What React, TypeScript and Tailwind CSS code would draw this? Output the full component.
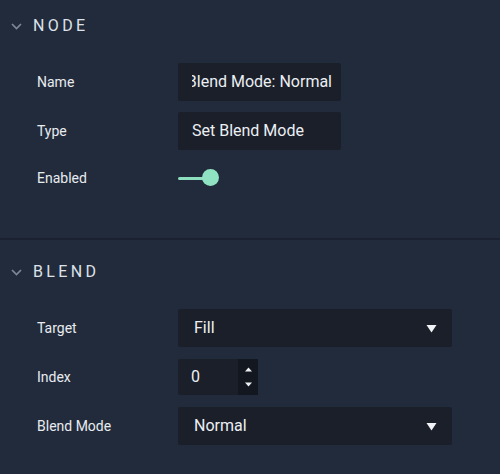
import { ReactNode } from 'react';

function Chevron() {
  return (
    <svg width="11" height="7" viewBox="0 0 11 7" className="shrink-0">
      <path d="M1 1l4.5 4.5L10 1" fill="none" stroke="#7d8798" strokeWidth="1.7" />
    </svg>
  );
}

function Caret() {
  return (
    <svg width="11" height="9" viewBox="0 0 11 9">
      <path d="M0.5 1h10L5.5 8.5z" fill="#f1f3f6" />
    </svg>
  );
}

function SectionHeader({ title }: { title: string }) {
  return (
    <div className="flex h-12 items-center gap-[11px] pl-[11px] pt-1">
      <Chevron />
      <span className="text-[16px] tracking-[0.21em] text-[#dde2ea]">{title}</span>
    </div>
  );
}

function Row({ label, children }: { label: string; children: ReactNode }) {
  return (
    <div className="flex h-[38px] items-center">
      <div className="w-[178px] shrink-0 pl-[37px] text-[14px] text-[#e8ebf0]">{label}</div>
      {children}
    </div>
  );
}

function Select({ value }: { value: string }) {
  return (
    <div className="flex h-[38px] w-[274px] items-center justify-between rounded-[2px] bg-[#1a1f2a] pl-4 pr-[15px] text-[16px] text-[#eceff3]">
      <span>{value}</span>
      <Caret />
    </div>
  );
}

export default function App() {
  return (
    <div
      className="h-[474px] w-[500px] overflow-hidden bg-[#222b3b]"
      style={{ fontFamily: 'Roboto, "Noto Sans", sans-serif' }}
    >
      {/* Node section */}
      <div className="pb-[43px]">
        <SectionHeader title="NODE" />
        <div className="mt-[15px] flex flex-col gap-[11px]">
          <Row label="Name">
            <div className="flex h-[38px] w-[163px] items-center rounded-[2px] bg-[#1a1f2a] pl-[14px] pr-[9px] text-[16px] text-[#eceff3]">
              <div className="flex flex-1 justify-end overflow-hidden whitespace-nowrap">
                <span>Set Blend Mode: Normal</span>
              </div>
            </div>
          </Row>
          <Row label="Type">
            <div className="flex h-[38px] w-[163px] items-center rounded-[2px] bg-[#1a1f2a] px-[14px] text-[16px] text-[#eceff3]">
              Set Blend Mode
            </div>
          </Row>
          <div className="flex h-[34px] items-center">
            <div className="w-[178px] shrink-0 pl-[37px] text-[14px] text-[#e8ebf0]">Enabled</div>
            <div className="relative flex h-[18px] w-[42px] items-center">
              <div className="h-[3px] w-[28px] rounded-full bg-[#8ddfbf]" />
              <div className="absolute left-[24px] top-0 h-[17px] w-[17px] rounded-full bg-[#8fe3c3]" />
            </div>
          </div>
        </div>
      </div>

      <div className="h-[2px] bg-[#1b2130]" />

      {/* Blend section */}
      <div className="pt-[6px]">
        <SectionHeader title="BLEND" />
        <div className="mt-[15px] flex flex-col gap-[11px]">
          <Row label="Target">
            <Select value="Fill" />
          </Row>
          <Row label="Index">
            <div className="flex h-[36px] w-[80px] items-stretch rounded-[2px] bg-[#1a1f2a]">
              <div className="flex flex-1 items-center pl-[13px] text-[16px] text-[#eceff3]">0</div>
              <div className="flex w-[20px] flex-col items-center justify-center gap-[10px] bg-[#131720]">
                <svg width="7" height="5" viewBox="0 0 7 5">
                  <path d="M0 4.5h7L3.5 0.5z" fill="#eef0f4" />
                </svg>
                <svg width="7" height="5" viewBox="0 0 7 5">
                  <path d="M0 0.5h7L3.5 4.5z" fill="#eef0f4" />
                </svg>
              </div>
            </div>
          </Row>
          <Row label="Blend Mode">
            <Select value="Normal" />
          </Row>
        </div>
      </div>
    </div>
  );
}
